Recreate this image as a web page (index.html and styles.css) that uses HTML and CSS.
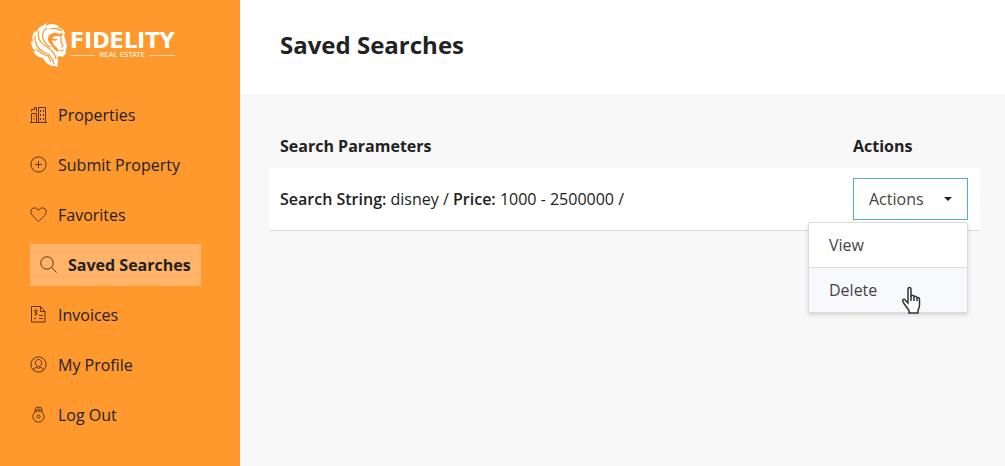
FILE: index.html
```
<!DOCTYPE html>
<html lang="en">
<head>
<meta charset="utf-8">
<meta name="viewport" content="width=device-width, initial-scale=1">
<title>Saved Searches</title>
<link rel="stylesheet" href="styles.css">
</head>
<body>
<aside class="sidebar">
  <a class="logo" href="#">
    <svg class="lion" viewBox="0 0 38 46" width="38" height="46" aria-hidden="true">
      <path fill="#fff" d="M10 5 L17 1 L15.500 4 Q22 0 29 4 L27 5 Q33 6 35 11 L34 13 L36 20 L37 24 L36 27 L36 31 L33 35 L30 34 L27 35 Q29 39 27 45 Q24 43 22 44 Q15 41 13 36 Q6 35 3 29 L6 30 Q1 25 1 19 L3 20 Q1 14 5 9 L7 10 Q7 7 10 5Z"/>
      <path fill="#ff982d" d="M21 12 Q25 9 29 12 L33 11 L32 14 L27 14 L22 15 L24 17 L28 17 L25 19 L22 18 Q23 23 26 25 L29 28 L28 30 Q23 27 21 23 L18 19 Q17 14 21 12Z"/>
      <path fill="none" stroke="#ff982d" stroke-width="1.200" d="M5 14 Q4 25 14 30 Q22 33 24 42 M9 9 Q6 17 14 23 Q24 28 26 37 M17 6 Q11 10 13 17 Q15 22 20 25 M20 7 Q27 5 32 9 M6 27 Q13 33 18 34 L21 40 M31 14 L31 20 L33 24 L31 25 M30 29 L34 28"/>
    </svg>
    <span class="logo-text">
      <span class="logo-name">FIDELITY</span>
      <span class="logo-sub">REAL ESTATE</span>
    </span>
  </a>
  <nav>
    <ul class="menu">
      <li><a href="#">
        <svg class="icon" viewBox="0 0 18 18"><path d="M8.500 16.500V1.500h7v15zM1.500 16.500v-9h5v9zM0 16.500h17M1.500 5.500V3.500h3v-2h2v4M10.500 4v2m3-2v2m-3 2v2m3-2v2m-3 2v2m3-2v2M4 9.500v1m0 2v1"/></svg>
        Properties</a></li>
      <li><a href="#">
        <svg class="icon" viewBox="0 0 18 18"><circle cx="8.500" cy="8.500" r="7.600"/><path d="M8.500 5v7M5 8.500h7"/></svg>
        Submit Property</a></li>
      <li><a href="#">
        <svg class="icon" viewBox="0 0 18 18"><path d="M8.500 15.500C5 12 .8 9 .8 5.500c0-4 5.700-5 7.700-1.200 2-3.800 7.700-2.800 7.700 1.200C16.200 9 12 12 8.500 15.500z"/></svg>
        Favorites</a></li>
      <li><a class="active" href="#">
        <svg class="icon" viewBox="0 0 18 18"><circle cx="7" cy="7" r="6.200"/><path d="M11.500 11.500l5 5"/></svg>
        Saved Searches</a></li>
      <li><a href="#">
        <svg class="icon" viewBox="0 0 18 18"><path d="M1.500 .5h9l4.500 5v10.500h-13.500zM10.500 .5v5H15M7.500 4.500H5q-1.200 1 0 2h1.500q1.200 1 0 2h-2M6 3.500v6M9 9.500h4M4 12.500h2m3 0h4"/></svg>
        Invoices</a></li>
      <li><a href="#">
        <svg class="icon" viewBox="0 0 18 18"><circle cx="8.500" cy="8.500" r="7.600"/><path d="M8.500 3.500c4.500 0 4 7 0 7s-4.500-7 0-7zM3.500 14c.5-2 2-2.500 3.500-2.500l1.500 1 1.500-1c1.500 0 3 .5 3.500 2.500"/></svg>
        My Profile</a></li>
      <li><a href="#">
        <svg class="icon" viewBox="0 0 18 18"><circle cx="8.500" cy="10.500" r="5.600"/><circle cx="8.500" cy="10.500" r="1.600"/><path d="M5 6V4q0-3 3.500-3T12 4v2M7 5V4q0-1 1.500-1T10 4v1"/></svg>
        Log Out</a></li>
    </ul>
  </nav>
</aside>

<main class="content">
  <header class="page-header">
    <h1>Saved Searches</h1>
  </header>
  <div class="table-wrap">
    <table class="searches">
      <thead>
        <tr><th>Search Parameters</th><th class="col-actions">Actions</th></tr>
      </thead>
      <tbody>
        <tr>
          <td><strong>Search String:</strong> disney / <strong>Price:</strong> 1000 - 2500000 /</td>
          <td class="col-actions">
            <div class="dropdown">
              <button class="dropdown-toggle" type="button" aria-haspopup="true" aria-expanded="true">Actions</button>
              <div class="dropdown-menu">
                <a href="#">View</a>
                <a class="hover" href="#">Delete</a>
                <svg class="pointer" viewBox="0 0 20 28" width="20" height="28" aria-hidden="true">
                  <path d="M7 17V3.500Q7 1.500 8.500 1.500T10 3.500V10Q12.500 8.500 13 10.500 15 9.500 16 11.500 18.500 11 18.500 14V19Q18.500 22 17 24V27H8V24.500L3 17.500Q1 14.500 2 13.500 3.500 12.500 5 15z"/>
                  <path d="M10 10v5M13 11v4M16 12v3"/>
                </svg>
              </div>
            </div>
          </td>
        </tr>
      </tbody>
    </table>
  </div>
</main>
</body>
</html>
```
FILE: styles.css
```
* {
  box-sizing: border-box;
}

body {
  margin: 0;
  display: flex;
  min-height: 100vh;
  font-family: "Open Sans", sans-serif;
  font-size: 16px;
  line-height: 22px;
  color: #222;
  background-color: #f8f8f8;
}

a {
  color: inherit;
  text-decoration: none;
}

.sidebar {
  flex: 0 0 240px;
  padding: 22px 30px;
  background-color: #ff982d;
}

/* logo */
.logo {
  display: flex;
  align-items: center;
  gap: 2px;
  color: #fff;
}

.lion {
  flex: none;
}

.logo-text {
  font-family: "DejaVu Sans", sans-serif;
}

.logo-name {
  display: block;
  font-size: 21px;
  font-weight: bold;
  line-height: 20px;
}

.logo-sub {
  display: flex;
  align-items: center;
  gap: 4px;
  font-size: 7px;
  line-height: 8px;
  white-space: nowrap;
}

.logo-sub::before,
.logo-sub::after {
  content: "";
  flex: 1;
  height: 1px;
  background-color: #ffd9b0;
}

/* side menu */
.menu {
  list-style: none;
  margin: 26px 0 0;
  padding: 0;
  display: flex;
  flex-direction: column;
  gap: 8px;
}

.menu a {
  display: inline-flex;
  align-items: center;
  gap: 10px;
  height: 42px;
  white-space: nowrap;
}

.menu li {
  display: flex;
}

.menu .active {
  padding: 0 10px;
  font-weight: bold;
  background-color: #ffb46a;
}

.icon {
  width: 18px;
  height: 18px;
  fill: none;
  stroke: #5b3512;
  stroke-width: 1;
}

/* content */
.content {
  flex: 1;
  min-width: 0;
}

.page-header {
  padding: 29px 40px 33px;
  background-color: #fff;
}

h1 {
  margin: 0;
  font-size: 24px;
  font-weight: bold;
  line-height: 32px;
}

.table-wrap {
  padding: 31px 25px 0 29px;
}

.searches {
  width: 100%;
  border-collapse: separate;
  border-spacing: 0;
}

.searches th {
  padding: 10px 11px 11px;
  font-weight: bold;
  text-align: left;
}

.searches td {
  padding: 10px 11px;
  background-color: #fff;
  border-bottom: 1px solid #ddd;
}

.searches strong {
  font-weight: 600;
}

.searches .col-actions {
  width: 138px;
}

.dropdown {
  position: relative;
}

.dropdown-toggle {
  display: flex;
  align-items: center;
  justify-content: space-between;
  width: 115px;
  height: 42px;
  padding: 0 15px;
  font: inherit;
  color: #444;
  background-color: #fff;
  border: 1px solid #54b1d0;
}

.dropdown-toggle::after {
  content: "";
  border: 4px solid transparent;
  border-top-color: #222;
  border-bottom: 0;
}

.dropdown-menu {
  position: absolute;
  top: 44px;
  left: -45px;
  width: 160px;
  color: #444;
  background-color: #fff;
  border: 1px solid #ddd;
  border-radius: 2px;
  box-shadow: 0 2px 4px rgba(0, 0, 0, 0.15);
}

.dropdown-menu a {
  display: block;
  padding: 11px 20px;
}

.dropdown-menu a + a {
  border-top: 1px solid #ddd;
}

.dropdown-menu .hover {
  background-color: #f8f9fc;
}

.pointer {
  position: absolute;
  right: 46px;
  bottom: -2px;
  fill: #fff;
  stroke: #333;
  stroke-width: 1.5;
}
```
